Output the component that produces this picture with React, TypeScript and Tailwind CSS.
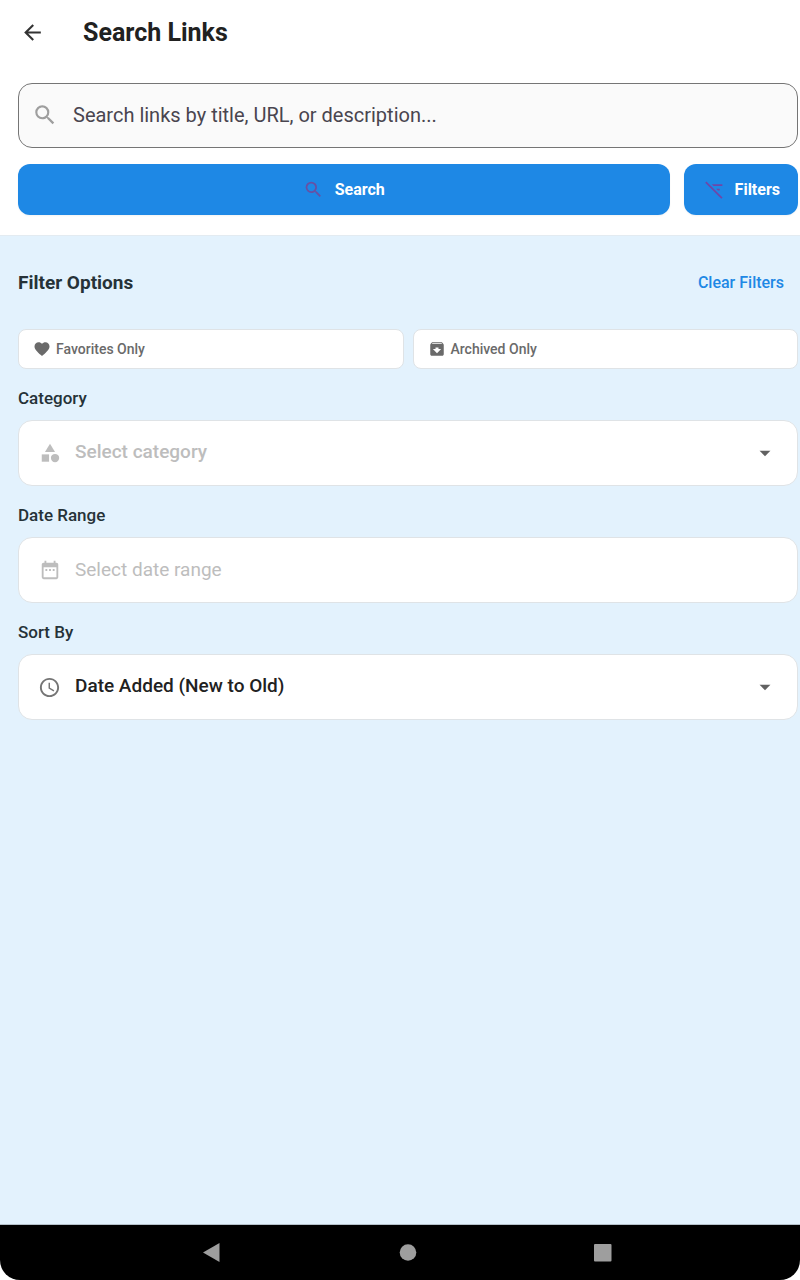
import { useState, type ReactNode } from "react";
import {
  MdAccessTime,
  MdArchive,
  MdArrowBack,
  MdArrowDropDown,
  MdCategory,
  MdDateRange,
  MdFavorite,
  MdSearch,
} from "react-icons/md";

const fieldBox =
  "relative flex h-[66px] items-center rounded-[14px] border border-[#dfe3e6] bg-white";

function FilterOffIcon() {
  return (
    <svg width="21" height="21" viewBox="0 0 24 24" fill="#6f46a8" aria-hidden="true">
      <path d="M10.830 8H21V6H8.830z" />
      <path d="M15.830 13H18v-2h-4.170z" />
      <path d="M1.390 4.220 2.800 2.810 21.180 21.190 19.770 22.600z" />
    </svg>
  );
}

function Field({ id, label, children }: { id: string; label: string; children: ReactNode }) {
  return (
    <div className="flex flex-col gap-[10px] pt-[17px]">
      <label htmlFor={id} className="text-[17px] leading-6 font-medium text-[#263238]">
        {label}
      </label>
      {children}
    </div>
  );
}

function Toggle({ icon, label }: { icon: ReactNode; label: string }) {
  const [on, setOn] = useState(false);
  return (
    <button
      type="button"
      aria-pressed={on}
      onClick={() => setOn(!on)}
      className="flex h-10 flex-1 items-center gap-[5px] rounded-lg border border-[#dfe3e6] bg-white pl-[14px] text-sm font-medium text-[#6a6a6a]"
    >
      {icon}
      {label}
    </button>
  );
}

export default function App() {
  const [category, setCategory] = useState("");
  const [dateRange, setDateRange] = useState("");

  const clearFilters = () => {
    setCategory("");
    setDateRange("");
  };

  return (
    <div className="flex min-h-screen flex-col bg-white font-['Roboto',sans-serif]">
      <header className="flex h-[65px] items-center pl-5">
        <button type="button" aria-label="Back" className="text-[#333333]">
          <MdArrowBack size={25} />
        </button>
        <h1 className="pl-[38px] text-[25px] font-bold text-[#212121]">Search Links</h1>
      </header>

      <form
        className="flex flex-col gap-4 pt-[18px] pr-[2px] pb-5 pl-[18px]"
        onSubmit={(e) => e.preventDefault()}
      >
        <div className="relative flex h-[65px]">
          <MdSearch size={26} className="absolute top-[19px] left-[14px] text-[#9e9e9e]" />
          <input
            type="text"
            aria-label="Search links"
            placeholder="Search links by title, URL, or description..."
            className="w-full rounded-[14px] border border-[#757575] bg-[#fafafa] pb-[2px] pl-[54px] text-xl text-[#212121] outline-none placeholder:text-[#49454f]"
          />
        </div>
        <div className="flex gap-[14px]">
          <button
            type="submit"
            className="flex h-[51px] flex-1 items-center justify-center gap-[11px] rounded-xl bg-[#1e88e5] text-base font-bold text-white shadow-xs"
          >
            <MdSearch size={21} className="text-[#6750a4]" />
            Search
          </button>
          <button
            type="button"
            className="flex h-[51px] items-center gap-[10px] rounded-xl bg-[#1e88e5] pr-[18px] pl-5 text-base font-bold text-white shadow-xs"
          >
            <FilterOffIcon />
            Filters
          </button>
        </div>
      </form>

      <main className="flex-1 border-t border-[#e3ebf1] bg-[#e3f2fd] pt-[23px] pr-[2px] pb-6 pl-[18px]">
        <div className="flex h-12 items-center justify-between pr-[14px]">
          <h2 className="text-[19px] font-bold text-[#263238]">Filter Options</h2>
          <button
            type="button"
            onClick={clearFilters}
            className="text-base font-medium text-[#1e88e5]"
          >
            Clear Filters
          </button>
        </div>

        <div className="flex gap-[9px] pt-[22px]">
          <Toggle icon={<MdFavorite size={18} />} label="Favorites Only" />
          <Toggle icon={<MdArchive size={18} />} label="Archived Only" />
        </div>

        <div className="flex flex-col">
          <Field id="category" label="Category">
            <div className={fieldBox}>
              <MdCategory size={22} className="absolute left-5 text-[#bdbdbd]" />
              <select
                id="category"
                value={category}
                onChange={(e) => setCategory(e.target.value)}
                className="h-full w-full appearance-none bg-transparent pb-[2px] pl-14 text-[19px] font-medium text-[#bdbdbd] outline-none"
              >
                <option value="">Select category</option>
              </select>
              <MdArrowDropDown
                size={26}
                className="pointer-events-none absolute right-[19px] text-[#616161]"
              />
            </div>
          </Field>

          <Field id="dates" label="Date Range">
            <div className={fieldBox}>
              <MdDateRange size={22} className="absolute left-5 text-[#bdbdbd]" />
              <input
                id="dates"
                type="text"
                value={dateRange}
                onChange={(e) => setDateRange(e.target.value)}
                placeholder="Select date range"
                className="h-full w-full bg-transparent pb-[2px] pl-14 text-[19px] text-[#212121] outline-none placeholder:text-[#bdbdbd]"
              />
            </div>
          </Field>

          <Field id="sort" label="Sort By">
            <div className={fieldBox}>
              <MdAccessTime size={23} className="absolute left-[19px] text-[#757575]" />
              <select
                id="sort"
                className="h-full w-full appearance-none bg-transparent pb-[2px] pl-14 text-[19px] font-medium text-[#212121] outline-none"
              >
                <option>Date Added (New to Old)</option>
              </select>
              <MdArrowDropDown
                size={26}
                className="pointer-events-none absolute right-[19px] text-[#616161]"
              />
            </div>
          </Field>
        </div>
      </main>

      <nav aria-label="System" className="border-t border-[#b5c1ca] bg-white">
        <div className="flex h-[55px] items-center justify-center gap-[173px] rounded-b-[20px] bg-black pl-[14px] text-[#9e9e9e]">
          <button type="button" aria-label="System back">
            <svg width="22" height="22" viewBox="0 0 22 22" fill="currentColor">
              <path d="M2 10.500 18.500 1v19z" />
            </svg>
          </button>
          <button type="button" aria-label="Home">
            <svg width="22" height="22" viewBox="0 0 22 22" fill="currentColor">
              <circle cx="12" cy="10.500" r="8.300" />
            </svg>
          </button>
          <button type="button" aria-label="Recent apps">
            <svg width="22" height="22" viewBox="0 0 22 22" fill="currentColor">
              <rect x="3" y="2" width="17.500" height="17.500" rx="1" />
            </svg>
          </button>
        </div>
      </nav>
    </div>
  );
}
